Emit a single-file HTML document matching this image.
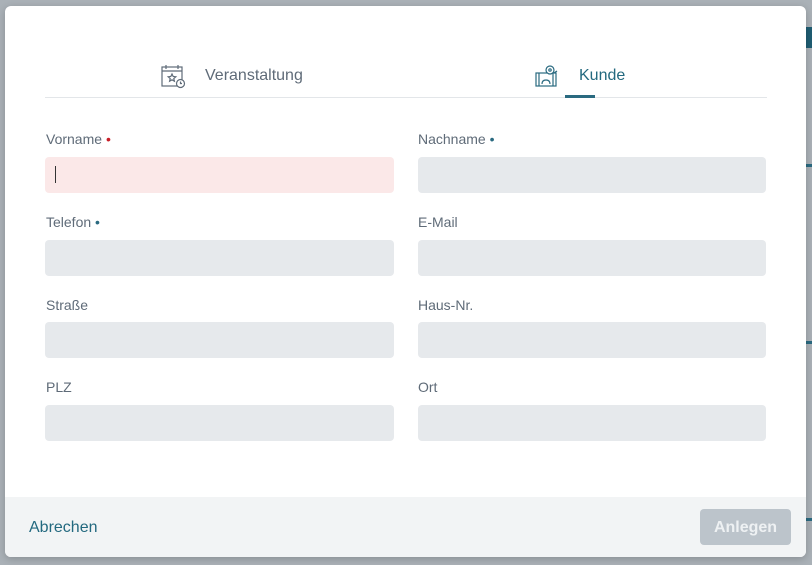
<!DOCTYPE html>
<html><head><meta charset="utf-8"><style>
*{box-sizing:border-box;margin:0;padding:0}
body{width:812px;height:565px;background:#aab1b7;font-family:"Liberation Sans",sans-serif;position:relative;overflow:hidden}
.bg1{position:absolute;left:806px;top:27px;width:6px;height:21px;background:#1f5d72}
.bgl{position:absolute;left:806px;width:6px;height:3px;background:#2a6a80}
.modal{position:absolute;left:5px;top:6px;width:801px;height:551px;background:#fff;border-radius:6px;overflow:hidden;box-shadow:0 2px 8px rgba(0,0,0,.2)}
.tabline{position:absolute;left:40px;top:91px;width:722px;height:1px;background:#e3e6e9}
.tab{position:absolute;top:60px;font-size:16px;line-height:20px}
.ul{position:absolute;left:560px;top:89px;width:30px;height:3px;background:#2a6a80}
.lbl{position:absolute;font-size:14px;color:#5f6b78;line-height:16px}
.inp{position:absolute;width:349px;height:36px;background:#e6e9ec;border-radius:4px}
.r{width:348px}
.dot{font-size:14px}
.foot{position:absolute;left:0;top:491px;width:801px;height:60px;background:#f2f4f5}
.ab{position:absolute;left:24px;top:513px;font-size:16px;color:#23697f}
.an{position:absolute;left:695px;top:503px;width:91px;height:36px;background:#bcc4cb;border-radius:4px;color:#eef1f3;font-weight:bold;font-size:16px;text-align:center;line-height:38px}
</style></head><body>
<div class="bg1"></div>
<div class="bgl" style="top:164px"></div>
<div class="bgl" style="top:341px"></div>
<div class="bgl" style="top:518px"></div>
<div class="modal">
<svg style="position:absolute;left:156px;top:58px" width="26" height="26" viewBox="0 0 26 26" fill="none" stroke="#5f6b78" stroke-width="1.2"><rect x="1" y="3" width="20" height="19"/><line x1="1" y1="7" x2="21" y2="7"/><line x1="5" y1="1" x2="5" y2="5"/><line x1="17" y1="1" x2="17" y2="5"/><path d="M11 10l1.2 2.5 2.6.3-2 1.8.6 2.6-2.4-1.4-2.4 1.4.6-2.6-2-1.8 2.6-.3z"/><circle cx="19.5" cy="19.5" r="4" fill="#fff"/><path d="M19.5 17.5v2h1.5"/></svg>
<div class="tab" style="left:200px;color:#5f6b78">Veranstaltung</div>
<svg style="position:absolute;left:530px;top:58px" width="26" height="26" viewBox="0 0 26 26" fill="none" stroke="#2a6a80" stroke-width="1.2"><rect x="1" y="9" width="20" height="13"/><line x1="4" y1="9" x2="4" y2="22"/><line x1="18" y1="9" x2="18" y2="22"/><path d="M7 20c0-3 2-4 4-4s4 1 4 4"/><circle cx="15" cy="6" r="4" fill="#fff"/><circle cx="15" cy="6" r="1.2"/><path d="M19 9l3-2"/></svg>
<div class="tab" style="left:574px;color:#23697f">Kunde</div>
<div class="tabline"></div><div class="ul"></div>

<div class="lbl" style="left:41px;top:125px">Vorname <span class="dot" style="color:#c81e28">•</span></div>
<div class="inp" style="left:40px;top:151px;background:#fbe8e8"><div style="position:absolute;left:10px;top:9px;width:1px;height:17px;background:#333"></div></div>
<div class="lbl" style="left:413px;top:125px">Nachname <span class="dot" style="color:#2a6a80">•</span></div>
<div class="inp r" style="left:413px;top:151px"></div>

<div class="lbl" style="left:41px;top:208px">Telefon <span class="dot" style="color:#2a6a80">•</span></div>
<div class="inp" style="left:40px;top:234px"></div>
<div class="lbl" style="left:413px;top:208px">E-Mail</div>
<div class="inp r" style="left:413px;top:234px"></div>

<div class="lbl" style="left:41px;top:291px">Straße</div>
<div class="inp" style="left:40px;top:316px"></div>
<div class="lbl" style="left:413px;top:291px">Haus-Nr.</div>
<div class="inp r" style="left:413px;top:316px"></div>

<div class="lbl" style="left:41px;top:373px">PLZ</div>
<div class="inp" style="left:40px;top:399px"></div>
<div class="lbl" style="left:413px;top:373px">Ort</div>
<div class="inp r" style="left:413px;top:399px"></div>

<div class="foot"></div>
<div class="ab">Abrechen</div>
<div class="an">Anlegen</div>
</div>
</body></html>
